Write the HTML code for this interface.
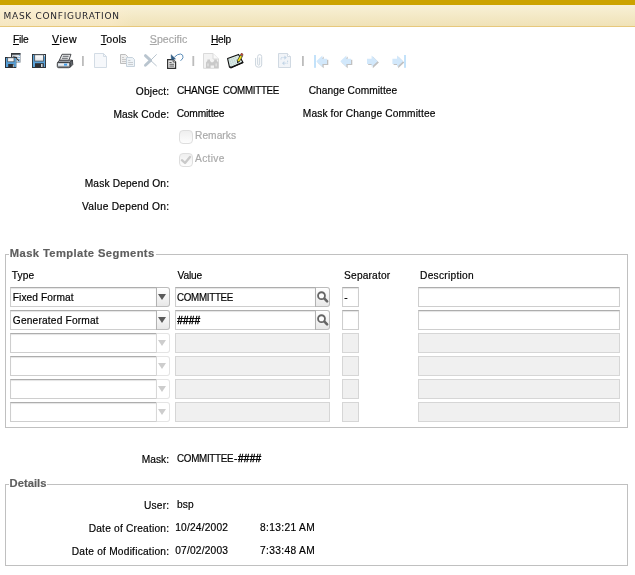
<!DOCTYPE html>
<html>
<head>
<meta charset="utf-8">
<title>Mask Configuration</title>
<style>
html,body{margin:0;padding:0;background:#fff;}
body{width:635px;height:575px;position:relative;overflow:hidden;font-family:"Liberation Sans",sans-serif;font-size:10.2px;color:#000;}
.x{position:absolute;white-space:pre;line-height:13px;-webkit-text-stroke:0.18px currentColor;}
.x u{text-decoration:underline;text-underline-offset:1px;}
.lg{background:#fff;box-shadow:-1px 0 0 #fff,1px 0 0 #fff;}
#stripe{position:absolute;left:0;top:0;width:635px;height:5px;background:#cca300;}
#title{position:absolute;left:0;top:5px;width:635px;height:21px;background:linear-gradient(to right,rgba(255,238,208,.38) 0,rgba(255,238,208,.38) 112px,rgba(255,238,212,0) 134px),linear-gradient(#f8f1d7,#f0e2b7);border-bottom:1px solid #e7c87c;}
.fs{position:absolute;border:1px solid #c0c0c0;}
.inp{position:absolute;height:18px;border:1px solid #cecece;border-top-color:#adadad;background:#fff;box-shadow:inset 0 1px 1px #e4e4e4;}
.inp.off{background:#f0f0f0;border-color:#d6d6d6;box-shadow:none;}
.dd{position:absolute;width:12px;height:18px;border:1px solid #bcbcbc;border-left:none;background:linear-gradient(#fff,#e8e8e8);box-shadow:-1px 0 0 #b2b2b2;border-radius:0 3px 3px 0;}
.dd i{position:absolute;left:1px;top:6px;width:0;height:0;border-left:4px solid transparent;border-right:4px solid transparent;border-top:6px solid #5a5a5a;}
.dd.off{border-color:#e4e4e4;background:#fff;box-shadow:-1px 0 0 #d8d8d8;}
.dd.off i{border-top-color:#cdcdcd;}
.mg{position:absolute;width:13px;height:18px;border:1px solid #bcbcbc;border-left:none;background:linear-gradient(#fff,#e8e8e8);box-shadow:-1px 0 0 #b2b2b2;border-radius:0 3px 3px 0;}
.mg svg{position:absolute;left:0;top:0;}
.cb{position:absolute;width:12px;height:12px;border:1px solid #dedede;border-radius:4px;background:linear-gradient(#efefef,#fdfdfd);}
.ic{position:absolute;overflow:visible;}
.sep{position:absolute;width:2px;height:10px;top:56px;background:#bdbdbd;}
</style>
</head>
<body>
<div id="stripe"></div>
<div id="title"></div>
<div id="toolbar">
<svg class="ic" style="left:0;top:48px" width="420" height="24" viewBox="0 48 420 24">
<!-- save and close -->
<g>
<defs><linearGradient id="wg" x1="0" x2="1" y1="0" y2="0"><stop offset="0" stop-color="#b4bac0"/><stop offset="1" stop-color="#eef3f8"/></linearGradient></defs>
<rect x="11.5" y="53.5" width="8.8" height="9" fill="url(#wg)" stroke="#8e979f" stroke-width="0.6"/>
<rect x="11" y="53" width="9.4" height="1.7" fill="#33383d"/>
<rect x="11" y="53" width="1" height="5" fill="#33383d"/>
<path d="M19.4 55 V62.4 M18.2 57 V62" stroke="#62aae2" stroke-width="1" stroke-dasharray="0.9 1.1"/>
<path d="M13 56.3 L17.6 57.2 L16.6 58 L19.6 60.4 L18.8 61.2 L15.8 58.8 L15 59.9 Z" fill="#2b3035"/>
<rect x="5.5" y="57.5" width="10.3" height="10" fill="#559fd8" stroke="#2b3036" stroke-width="1"/>
<rect x="15.2" y="58" width="1" height="9" fill="#69aee2"/>
<rect x="7.7" y="57.8" width="6.3" height="4" fill="#f2f4f6" stroke="#4a5056" stroke-width="0.7"/>
<rect x="8.2" y="64" width="5.9" height="3.6" fill="#2c2e32"/>
<rect x="12.9" y="64.4" width="0.9" height="2.8" fill="#c9d0d6"/>
</g>
<!-- save -->
<g>
<defs><linearGradient id="lb" x1="0" x2="0" y1="0" y2="1"><stop offset="0" stop-color="#ffffff"/><stop offset="1" stop-color="#dfe3e7"/></linearGradient></defs>
<rect x="32.5" y="54.5" width="13" height="13" fill="#5aa3da" stroke="#30363c" stroke-width="1"/>
<rect x="34.7" y="54.8" width="8.8" height="6.3" fill="url(#lb)" stroke="#454b51" stroke-width="0.8"/>
<rect x="35" y="63.2" width="8.8" height="4" fill="#2e3034"/>
<rect x="41" y="64" width="1.6" height="3" fill="#ccd3d9"/>
<rect x="44" y="55.2" width="1" height="1.1" fill="#eef3f8"/>
</g>
<!-- printer -->
<g>
<path d="M62 54.3 L71 54.3 L68.8 60.6 L59.2 60.6 Z" fill="#e6e7e9" stroke="#3c3e42" stroke-width="0.9" stroke-linejoin="round"/>
<path d="M62.8 56.3 H68.6 M62 58.3 H67.8" stroke="#55585c" stroke-width="0.9"/>
<path d="M57.4 62.6 L59.6 60.2 L72.2 60.2 L69.8 62.6 Z" fill="#a4a8ae" stroke="#2e3034" stroke-width="0.8" stroke-linejoin="round"/>
<path d="M69.8 62.6 L72.4 60 L72.8 64.6 L69.8 67.6 Z" fill="#62666c" stroke="#2a2c30" stroke-width="0.8" stroke-linejoin="round"/>
<rect x="57.3" y="62.4" width="12.6" height="5.3" rx="1.3" fill="#bfc3c7" stroke="#2a2c30" stroke-width="0.9"/>
<rect x="58.2" y="63.7" width="10.8" height="1.9" fill="#e6eef4"/>
<rect x="64" y="63.7" width="3.1" height="1.9" fill="#3f9be8"/>
<path d="M58 67 H69.2" stroke="#55585c" stroke-width="0.9"/>
</g>
<rect x="82" y="56" width="1.8" height="10" fill="#bcbcbc"/>
<!-- new doc (disabled) -->
<g>
<path d="M94.5 53.5 H103.5 L106.5 56.5 V67.5 H94.5 Z" fill="#f6f8fb" stroke="#d3dce5" stroke-width="1"/>
<path d="M103.5 53.5 V56.5 H106.5" fill="none" stroke="#d3dce5" stroke-width="1"/>
</g>
<!-- copy (disabled) -->
<g>
<path d="M120.5 54.5 H125.5 L127.5 56.5 V63.5 H120.5 Z" fill="#efefef" stroke="#bdbdbd" stroke-width="1"/>
<path d="M122 57.5 H124 M122 59.5 H126 M122 61.5 H126" stroke="#c4c4c4" stroke-width="0.9"/>
<path d="M126.5 57.5 H132.5 L134.5 59.5 V66.5 H126.5 Z" fill="#eef3f7" stroke="#c6d2dc" stroke-width="1"/>
<path d="M128.2 60.5 H130.4 M128.2 62.5 H133 M128.2 64.5 H133" stroke="#c4c8cc" stroke-width="0.9"/>
</g>
<!-- delete X (disabled) -->
<g stroke="#b9c5cf" stroke-linecap="round" fill="none">
<path d="M145.4 55.6 L150.6 60.4" stroke-width="2.8"/>
<path d="M150.6 60.4 L156.4 65.8" stroke-width="1"/>
<path d="M145.4 65.2 L150.6 60.4" stroke-width="2.8"/>
<path d="M150.6 60.4 L156.4 54.6" stroke-width="1"/>
</g>
<!-- undo -->
<g>
<path d="M167.6 59.6 H173.2 L175.6 62 V68.3 H167.6 Z" fill="#e4e4e4" stroke="#333" stroke-width="1.2"/>
<path d="M173.2 59.6 V62 H175.6" fill="#fff" stroke="#333" stroke-width="0.8"/>
<path d="M169.4 62.5 H171.6 M169.4 64.3 H174 M169.4 66.1 H174" stroke="#555" stroke-width="0.9"/>
<path d="M171 54.6 L175.6 59 L171.4 59.8 Z" fill="#2f5b82" stroke="#2f5b82" stroke-width="0.4" stroke-linejoin="round"/>
<path d="M174.6 57 Q177.4 53.8 180.6 54 Q183.4 54.6 183 57.4 Q182.6 59.6 180.8 60.4" fill="none" stroke="#4a80b0" stroke-width="0.9" stroke-linecap="round"/>
</g>
<rect x="192.4" y="56" width="1.8" height="10" fill="#bcbcbc"/>
<!-- find (disabled) -->
<g>
<path d="M203.5 53.5 H213 L218.5 59 V68.3 H203.5 Z" fill="#f3f3f3" stroke="#dadada" stroke-width="1"/>
<path d="M213 53.5 V59 H218.5" fill="#fafafa" stroke="#dadada" stroke-width="1"/>
<path d="M206 68 V62.4 L207.4 60.8 V59.4 H210 V60.8 L211.2 62.2 H213 L214.2 60.8 V59.4 H216.8 V60.8 L218.4 62.4 V68 H214 V65.4 H210.6 V68 Z" fill="#c9c9c9"/>
<rect x="207.2" y="63.4" width="1.6" height="3" fill="#dedede"/>
<rect x="215.4" y="63.4" width="1.6" height="3" fill="#dedede"/>
</g>
<!-- edit -->
<g>
<path d="M227.6 58.6 L238.6 54.4 L243 62.4 L231 67.6 L229.4 66.8 Z" fill="#dbe9e6" stroke="#111" stroke-width="1.1" stroke-linejoin="round"/>
<path d="M229.6 59.6 L232 66.2 M231.6 58.8 L234 65.4 M233.6 58 L236 64.6 M235.6 57.2 L238 63.8" stroke="#a3c6bf" stroke-width="0.8" stroke-dasharray="0.9 0.9"/>
<path d="M229.4 66.8 L231 67.6 L243 62.4" fill="none" stroke="#111" stroke-width="1.5"/>
<path d="M240.2 55.4 L242.4 56.4 L239.2 62 L237 61 Z" fill="#f4e616" stroke="#222" stroke-width="0.7"/>
<path d="M240.4 54.6 Q241.2 52.8 242.4 53.6 Q243.4 54.6 242.6 56 Z" fill="#e8442c" stroke="#222" stroke-width="0.5"/>
<path d="M237 61 L239.2 62 L237 63.4 Z" fill="#222"/>
</g>
<!-- paperclip (disabled) -->
<path d="M255.6 58 V65 Q255.6 67.2 258.6 67.2 Q261.7 67.2 261.7 65 V56.6 Q261.7 54.6 259.7 54.6 Q257.7 54.6 257.7 56.6 V64.2 Q257.7 65.2 258.7 65.2 Q259.7 65.2 259.7 64.2 V57.6" fill="none" stroke="#cbd4dd" stroke-width="1"/>
<!-- refresh doc (disabled) -->
<g>
<path d="M278.5 53.5 H287.5 L290.5 56.5 V67.5 H278.5 Z" fill="#f1f4f8" stroke="#d0d9e2" stroke-width="1"/>
<path d="M287.5 53.5 V56.5 H290.5" fill="#fff" stroke="#d0d9e2" stroke-width="1"/>
<path d="M281 59.6 V57.6 H285" fill="none" stroke="#c2d5e6" stroke-width="1" stroke-dasharray="1.4 0.8"/>
<path d="M284.4 55.4 L286.8 57.6 L284.4 59.8 Z" fill="#c2d5e6"/>
<path d="M287.6 60.6 V63.2 H284" fill="none" stroke="#c2d5e6" stroke-width="1" stroke-dasharray="1.4 0.8"/>
<path d="M284.4 61 L282 63.2 L284.4 65.4 Z" fill="#c2d5e6"/>
</g>
<rect x="302" y="56" width="1.8" height="10" fill="#bcbcbc"/>
<!-- first -->
<g>
<rect x="314" y="55" width="2" height="12.8" fill="#c3e2fa"/>
<path d="M317.5 62.4 L323.7 56.4 V59.7 H328.3 V65.1 H323.7 V68.2 Z" fill="#c1c1c1"/>
<path d="M316.3 61.2 L322.4 55.5 V58.7 H327.0 V63.9 H322.4 V66.9 Z" fill="#d2e8fb"/>
</g>
<!-- prev -->
<g>
<path d="M341.5 62.4 L347.7 56.4 V59.7 H352.3 V65.1 H347.7 V68.2 Z" fill="#c1c1c1"/>
<path d="M340.3 61.2 L346.4 55.5 V58.7 H351.0 V63.9 H346.4 V66.9 Z" fill="#d2e8fb"/>
</g>
<!-- next -->
<g>
<path d="M378.9 62.4 L372.8 56.6 V59.7 H368.2 V65.1 H372.8 V68.2 Z" fill="#c1c1c1"/>
<path d="M377.7 61.2 L371.6 55.5 V58.7 H367.0 V63.9 H371.6 V66.9 Z" fill="#d2e8fb"/>
</g>
<!-- last -->
<g>
<path d="M404.3 62.4 L398.2 56.6 V59.7 H393.6 V65.1 H398.2 V68.2 Z" fill="#c1c1c1"/>
<path d="M403.1 61.2 L397.0 55.5 V58.7 H392.4 V63.9 H397.0 V66.9 Z" fill="#d2e8fb"/>
<rect x="404" y="55" width="2" height="12.8" fill="#c3e2fa"/>
</g>
</svg>

</div>
<div class="cb" style="left:179px;top:130px"></div>
<div class="cb" style="left:179px;top:153px"><svg class="ic" style="left:0;top:0" width="12" height="12" viewBox="0 0 12 12"><path d="M1.9 6.2 L5 9 L10 2.9" fill="none" stroke="#c9c9c9" stroke-width="2.3" stroke-linecap="round" stroke-linejoin="round"/></svg></div>
<div class="fs" style="left:5px;top:254px;width:621px;height:172px"></div>
<div class="fs" style="left:5px;top:484px;width:621px;height:80px"></div>
<div id="rows">
<div class="inp" style="left:10px;top:287px;width:145px"></div><div class="dd" style="left:157px;top:287px"><i></i></div>
<div class="inp" style="left:175px;top:287px;width:139px"></div><div class="mg" style="left:316px;top:287px"><svg width="14" height="17" viewBox="0 0 14 17"><circle cx="5.5" cy="7.7" r="3.45" fill="#fdfdfd" stroke="#666" stroke-width="1.8"/><path d="M8.5 10.7 L11.1 13.3" stroke="#666" stroke-width="2.6" stroke-linecap="round"/></svg></div>
<div class="inp" style="left:342px;top:287px;width:15px"></div>
<div class="inp" style="left:418px;top:287px;width:200px"></div>
<div class="inp" style="left:10px;top:310px;width:145px"></div><div class="dd" style="left:157px;top:310px"><i></i></div>
<div class="inp" style="left:175px;top:310px;width:139px"></div><div class="mg" style="left:316px;top:310px"><svg width="14" height="17" viewBox="0 0 14 17"><circle cx="5.5" cy="7.7" r="3.45" fill="#fdfdfd" stroke="#666" stroke-width="1.8"/><path d="M8.5 10.7 L11.1 13.3" stroke="#666" stroke-width="2.6" stroke-linecap="round"/></svg></div>
<div class="inp" style="left:342px;top:310px;width:15px"></div>
<div class="inp" style="left:418px;top:310px;width:200px"></div>
<div class="inp" style="left:10px;top:333px;width:145px"></div><div class="dd off" style="left:157px;top:333px"><i></i></div>
<div class="inp off" style="left:175px;top:333px;width:153px"></div>
<div class="inp off" style="left:342px;top:333px;width:15px"></div>
<div class="inp off" style="left:418px;top:333px;width:200px"></div>
<div class="inp" style="left:10px;top:356px;width:145px"></div><div class="dd off" style="left:157px;top:356px"><i></i></div>
<div class="inp off" style="left:175px;top:356px;width:153px"></div>
<div class="inp off" style="left:342px;top:356px;width:15px"></div>
<div class="inp off" style="left:418px;top:356px;width:200px"></div>
<div class="inp" style="left:10px;top:379px;width:145px"></div><div class="dd off" style="left:157px;top:379px"><i></i></div>
<div class="inp off" style="left:175px;top:379px;width:153px"></div>
<div class="inp off" style="left:342px;top:379px;width:15px"></div>
<div class="inp off" style="left:418px;top:379px;width:200px"></div>
<div class="inp" style="left:10px;top:402px;width:145px"></div><div class="dd off" style="left:157px;top:402px"><i></i></div>
<div class="inp off" style="left:175px;top:402px;width:153px"></div>
<div class="inp off" style="left:342px;top:402px;width:15px"></div>
<div class="inp off" style="left:418px;top:402px;width:200px"></div>
</div>
<div id="text" style="will-change:transform">
<div class="x" style="left:3.60px;top:10px;letter-spacing:0.713px;font-size:9.0px;color:#26262e;font-family:'DejaVu Sans',sans-serif;-webkit-text-stroke:0;">MASK CONFIGURATION</div>
<div class="x" style="left:12.50px;top:33px;transform:scaleX(0.9645);transform-origin:0 0;letter-spacing:-0.300px;font-size:10.6px;"><u>F</u>ile</div>
<div class="x" style="left:51.90px;top:33px;letter-spacing:0.693px;font-size:10.6px;"><u>V</u>iew</div>
<div class="x" style="left:100.80px;top:33px;letter-spacing:0.192px;font-size:10.6px;"><u>T</u>ools</div>
<div class="x" style="left:149.80px;top:33px;letter-spacing:0.058px;font-size:10.6px;color:#a6a6a6;"><u>S</u>pecific</div>
<div class="x" style="left:210.80px;top:33px;transform:scaleX(0.9621);transform-origin:0 0;letter-spacing:-0.300px;font-size:10.6px;"><u>H</u>elp</div>
<div class="x" style="left:135.80px;top:85px;letter-spacing:0.159px;">Object:</div>
<div class="x" style="left:176.70px;top:84px;"><span style="letter-spacing:-0.300px;display:inline-block;transform:scaleX(0.9979);transform-origin:0 0;">CHANGE </span><span style="letter-spacing:-0.300px;margin-left:1.88px;display:inline-block;transform:scaleX(0.9588);transform-origin:0 0;">COMMITTEE</span></div>
<div class="x" style="left:308.70px;top:84px;letter-spacing:0.047px;">Change Committee</div>
<div class="x" style="left:113.40px;top:108px;letter-spacing:0.142px;">Mask Code:</div>
<div class="x" style="left:176.70px;top:107px;letter-spacing:-0.186px;">Committee</div>
<div class="x" style="left:302.80px;top:107px;letter-spacing:0.125px;">Mask for Change Committee</div>
<div class="x" style="left:195.00px;top:129px;letter-spacing:0.040px;color:#a9a9a9;">Remarks</div>
<div class="x" style="left:195.00px;top:152px;letter-spacing:0.345px;color:#a9a9a9;">Active</div>
<div class="x" style="left:84.70px;top:177px;letter-spacing:0.159px;">Mask Depend On:</div>
<div class="x" style="left:82.00px;top:200px;letter-spacing:0.264px;">Value Depend On:</div>
<div class="x lg" style="left:9.80px;top:247px;letter-spacing:0.403px;font-size:11.2px;color:#5e5e5e;font-weight:bold;">Mask Template Segments</div>
<div class="x" style="left:11.70px;top:269px;letter-spacing:0.093px;">Type</div>
<div class="x" style="left:177.60px;top:269px;letter-spacing:-0.183px;">Value</div>
<div class="x" style="left:344.10px;top:269px;letter-spacing:0.169px;">Separator</div>
<div class="x" style="left:420.10px;top:269px;letter-spacing:0.251px;">Description</div>
<div class="x" style="left:12.80px;top:291px;letter-spacing:0.075px;">Fixed Format</div>
<div class="x" style="left:177.20px;top:291px;transform:scaleX(0.9588);transform-origin:0 0;letter-spacing:-0.300px;">COMMITTEE</div>
<div class="x" style="left:344.30px;top:291px;">-</div>
<div class="x" style="left:12.80px;top:314px;letter-spacing:0.173px;">Generated Format</div>
<div class="x" style="left:177.20px;top:314px;letter-spacing:0.101px;-webkit-text-stroke:0.4px currentColor;">####</div>
<div class="x" style="left:141.70px;top:453px;letter-spacing:0.040px;">Mask:</div>
<div class="x" style="left:176.80px;top:452px;"><span style="letter-spacing:-0.300px;display:inline-block;transform:scaleX(0.9622);transform-origin:0 0;">COMMITTEE</span><span style="margin-left:-1.32px;-webkit-text-stroke:0.3px currentColor;">-</span><span style="letter-spacing:0.201px;margin-left:0.61px;-webkit-text-stroke:0.4px currentColor;">####</span></div>
<div class="x lg" style="left:9.60px;top:477px;letter-spacing:0.022px;font-size:11.2px;color:#5e5e5e;font-weight:bold;">Details</div>
<div class="x" style="left:144.10px;top:499px;letter-spacing:0.148px;">User:</div>
<div class="x" style="left:177.00px;top:498px;letter-spacing:0.170px;">bsp</div>
<div class="x" style="left:88.70px;top:522px;letter-spacing:0.207px;">Date of Creation:</div>
<div class="x" style="left:175.20px;top:521px;letter-spacing:0.198px;">10/24/2002</div>
<div class="x" style="left:260.00px;top:521px;letter-spacing:0.354px;">8:13:21 AM</div>
<div class="x" style="left:71.70px;top:545px;letter-spacing:0.223px;">Date of Modification:</div>
<div class="x" style="left:175.20px;top:544px;letter-spacing:0.198px;">07/02/2003</div>
<div class="x" style="left:260.00px;top:544px;letter-spacing:0.354px;">7:33:48 AM</div>
</div>
</body>
</html>
